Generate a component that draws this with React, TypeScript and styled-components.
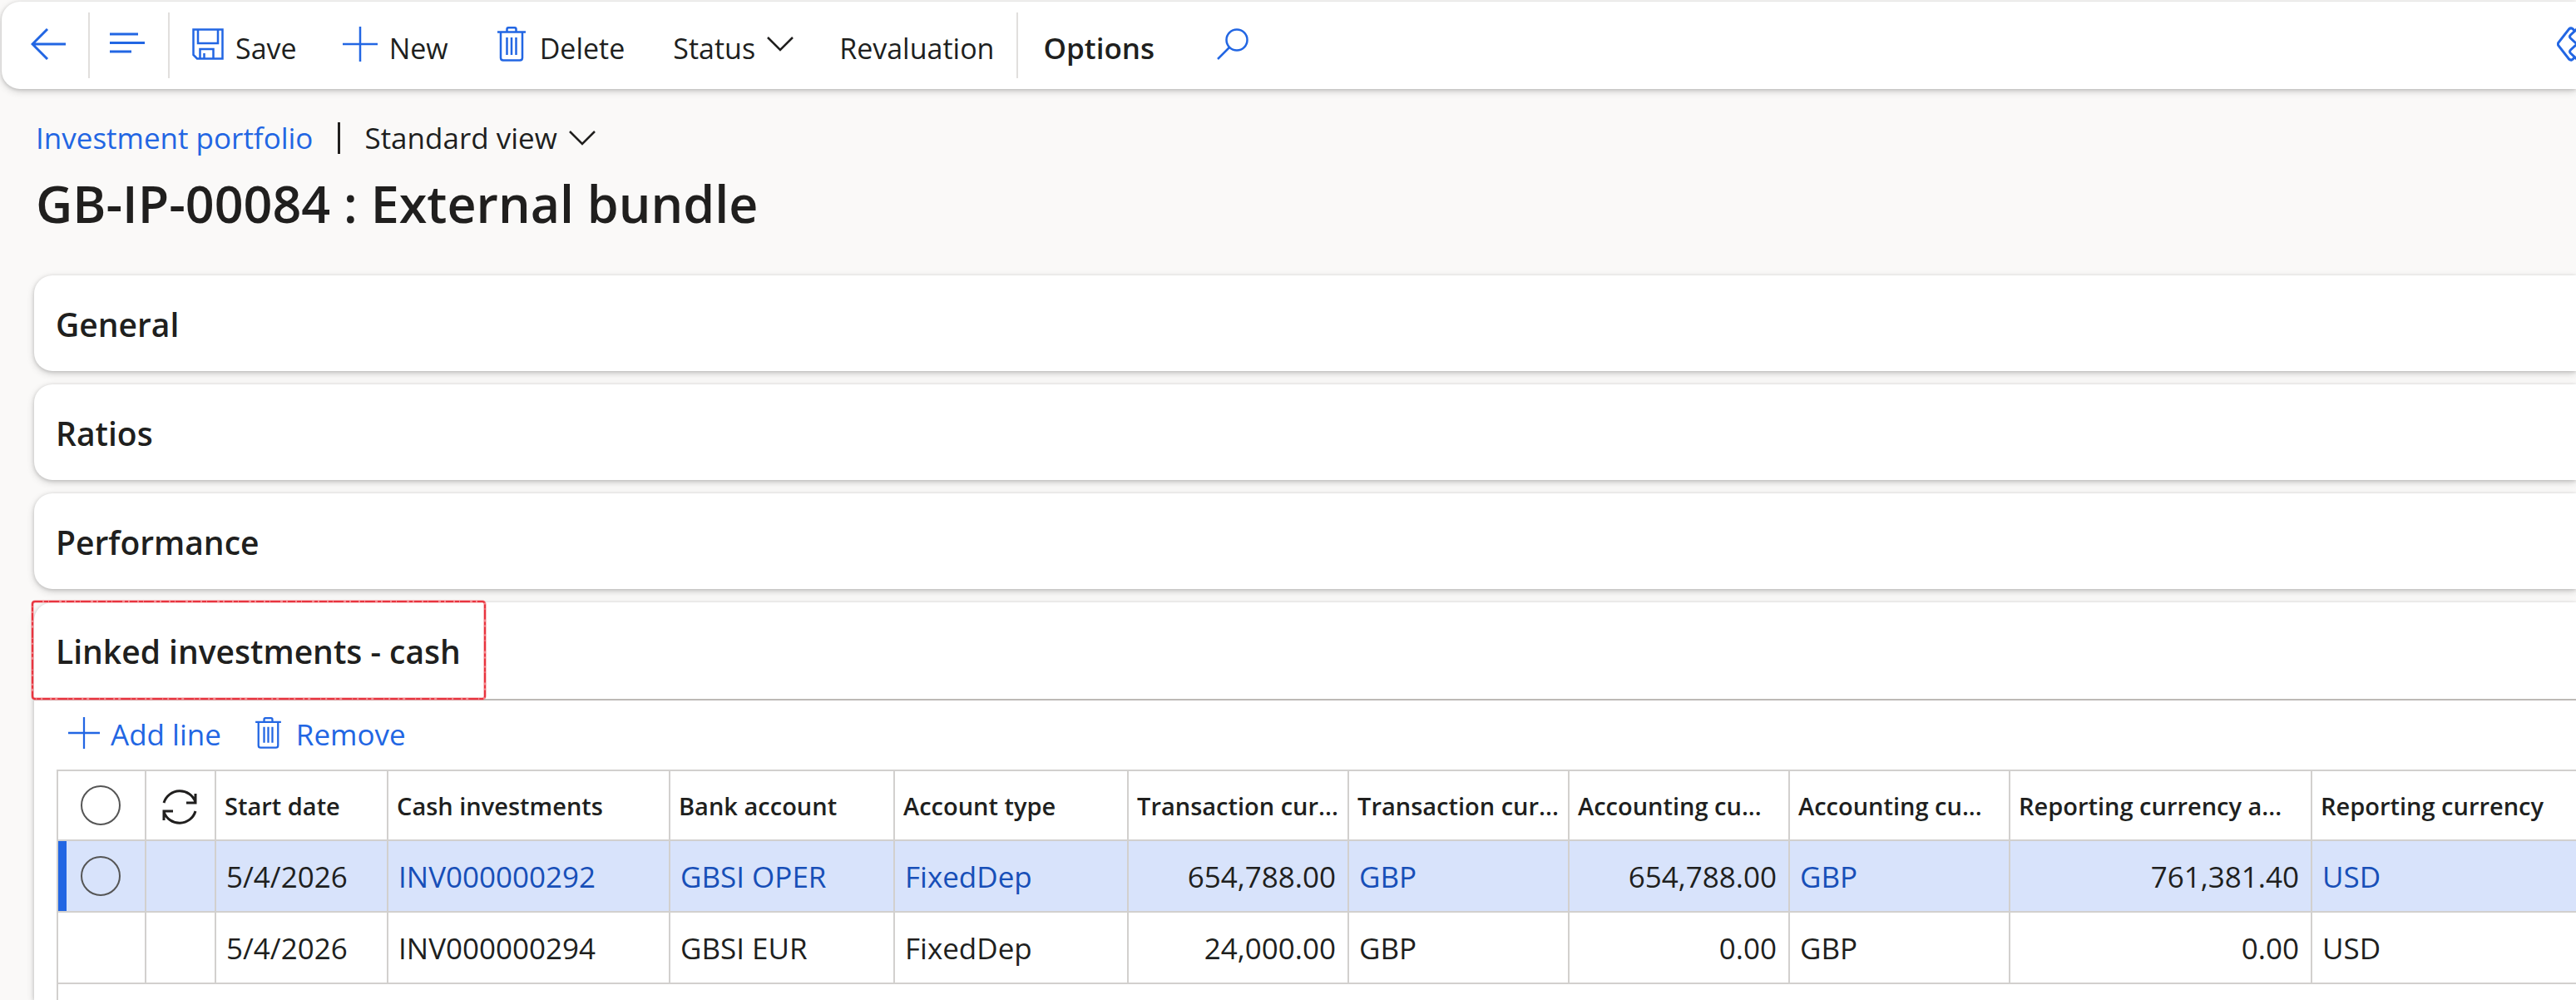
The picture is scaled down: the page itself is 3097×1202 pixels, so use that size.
import React from "react";
import styled, { createGlobalStyle, css } from "styled-components";

const blue = "#2266e3";
const ink = "#201f1e";
const line = "#d2d0ce";

const GlobalStyle = createGlobalStyle`
  * { box-sizing: border-box; }
  html, body { margin: 0; background: #faf9f8; }
  body, button, input { font-family: "Open Sans", "Noto Sans", sans-serif; color: ${ink}; }
  body { font-size: 35px; line-height: 48px; overflow: hidden; }
`;

const Page = styled.div`
  height: 100vh;
  display: flex;
  flex-direction: column;
  overflow: hidden;
`;

const raised = css`
  background: #fff;
  box-shadow: 0 3px 10px rgba(0, 0, 0, 0.16), 0 1px 4px rgba(0, 0, 0, 0.16);
`;

const Toolbar = styled.header`
  ${raised}
  margin: 2px 0 0 2px;
  height: 105px;
  flex: none;
  display: flex;
  align-items: center;
  border-radius: 22px 0 0 22px;
`;

const PlainButton = styled.button`
  border: 0;
  background: none;
  padding: 0;
  font-size: 35px;
  line-height: 48px;
  display: flex;
  align-items: center;
  white-space: nowrap;
  cursor: pointer;
`;

const IconButton = styled(PlainButton)<{ $width: number; $before: number }>`
  width: ${(p) => p.$width}px;
  height: 79px;
  padding: 0 0 3px ${(p) => p.$before}px;
  color: ${blue};
`;

const ToolButton = styled(PlainButton)<{ $gap?: number; $before?: number; $strong?: boolean }>`
  gap: ${(p) => p.$gap ?? 14}px;
  margin-left: ${(p) => p.$before ?? 0}px;
  padding-bottom: 3px;
  font-size: ${(p) => (p.$strong ? 35 : 34)}px;
  font-weight: ${(p) => (p.$strong ? 600 : 400)};
`;

const Label = styled.span`
  padding-top: 10px;
`;

const Rule = styled.span<{ $before?: number }>`
  width: 2px;
  height: 79px;
  background: #e1dfdd;
  margin-left: ${(p) => p.$before ?? 0}px;
`;

const Svg = styled.svg<{ $tone?: string }>`
  flex: none;
  display: block;
  color: ${(p) => p.$tone ?? "currentColor"};
  fill: none;
  stroke: currentColor;
`;

const EndTool = styled.div`
  margin-left: auto;
  width: 23px;
  padding-bottom: 3px;
  overflow: hidden;
`;

const Heading = styled.div`
  padding: 35px 43px 0;
`;

const Crumbs = styled.nav`
  display: flex;
  align-items: center;
`;

const CrumbLink = styled.a`
  color: ${blue};
  text-decoration: none;
`;

const Bar = styled.span`
  width: 3px;
  height: 38px;
  background: ${ink};
  margin: 0 29px 0 30px;
`;

const ViewButton = styled(PlainButton)`
  gap: 14px;
`;

const Title = styled.h1`
  margin: 15px 0 0;
  font-size: 61px;
  line-height: 80px;
  font-weight: 600;
`;

const Sections = styled.main`
  flex: 1;
  min-height: 0;
  display: flex;
  flex-direction: column;
  gap: 16px;
  padding: 46px 0 0 41px;
`;

const Card = styled.section<{ $open?: boolean }>`
  ${raised}
  flex: ${(p) => (p.$open ? "1" : "none")};
  border-radius: ${(p) => (p.$open ? "22px 0 0 0" : "22px 0 0 22px")};
  display: flex;
  flex-direction: column;
`;

const CardHead = styled.h2<{ $open?: boolean }>`
  position: relative;
  margin: 0;
  height: ${(p) => (p.$open ? 118 : 115)}px;
  border-bottom: ${(p) => (p.$open ? "2px solid #bdb9b6" : "0")};
`;

const CardToggle = styled(PlainButton)`
  width: 100%;
  height: 115px;
  padding: 3px 0 0 26px;
  font-size: 39px;
  line-height: 56px;
  font-weight: 600;
`;

const Marker = styled(Svg)`
  position: absolute;
  left: -4px;
  top: -3px;
  pointer-events: none;
`;

const Actions = styled.div`
  display: flex;
  align-items: center;
  height: 83px;
  padding: 0 0 5px 41px;
  gap: 41px;
`;

const Action = styled(PlainButton)<{ $gap: number }>`
  color: ${blue};
  gap: ${(p) => p.$gap}px;
`;

const ActionLabel = styled.span`
  padding-top: 4px;
`;

const GridBox = styled.div`
  flex: 1;
  margin-left: 27px;
  border-left: 2px solid ${line};
  border-top: 2px solid ${line};
  overflow: hidden;
`;

const Table = styled.table`
  table-layout: fixed;
  width: 3200px;
  border-collapse: separate;
  border-spacing: 0;
`;

const cell = css`
  height: 86px;
  padding: 2px 14px 0 12px;
  border-right: 2px solid ${line};
  border-bottom: 2px solid ${line};
  white-space: nowrap;
  vertical-align: middle;
`;

const Th = styled.th`
  ${cell}
  height: 84px;
  padding: 2px 0 0 10px;
  font-size: 29px;
  font-weight: 600;
  text-align: left;
`;

const LeadTh = styled(Th)`
  padding: 0 0 0 12px;
`;

const Td = styled.td<{ $right?: boolean }>`
  ${cell}
  text-align: ${(p) => (p.$right ? "right" : "left")};
`;

const Tr = styled.tr<{ $selected?: boolean }>`
  background: ${(p) => (p.$selected ? "#d8e3fb" : "#fff")};
  td:first-child {
    padding-top: 0;
    box-shadow: ${(p) => (p.$selected ? `inset 10px 0 0 ${blue}` : "none")};
  }
`;

const CellLink = styled.a`
  color: #174fb8;
  text-decoration: none;
`;

const Pick = styled.input`
  appearance: none;
  display: block;
  width: 48px;
  height: 48px;
  margin: 0 0 0 15px;
  border: 2px solid #555;
  border-radius: 50%;
  background: transparent;
  &:checked { background: ${blue}; }
`;

const RefreshIcon = styled(Svg)`
  margin: 4px 0 0 6px;
`;

const Plus = ({ size = 42 }: { size?: number }) => (
  <Svg width={size} height={size} viewBox="0 0 42 42" strokeWidth="2.500" $tone={blue}>
    <path d="M21 0v42M0 21h42" />
  </Svg>
);

const Trash = ({ width = 34, height = 42 }: { width?: number; height?: number }) => (
  <Svg width={width} height={height} viewBox="0 0 34 42" strokeWidth="2.500" $tone={blue}>
    <path d="M0 6.500h34M11.500 6V3q0-1.700 1.700-1.700h7.600q1.700 0 1.700 1.700v3M4 6.500V37.500q0 3 3 3h20q3 0 3-3V6.500M11.500 13v21M17 13v21M22.500 13v21" />
  </Svg>
);

const Chevron = () => (
  <Svg width="32" height="18" viewBox="0 0 32 18" strokeWidth="2.500">
    <path d="M1 1l15 15L31 1" />
  </Svg>
);

const columns = [106, 84, 207, 339, 270, 281, 265, 265, 265, 265, 363, 490];
const headers = [
  "Start date",
  "Cash investments",
  "Bank account",
  "Account type",
  "Transaction cur...",
  "Transaction cur...",
  "Accounting cu...",
  "Accounting cu...",
  "Reporting currency a...",
  "Reporting currency",
];
const rows = [
  ["5/4/2026", "INV000000292", "GBSI OPER", "FixedDep", "654,788.00", "GBP", "654,788.00", "GBP", "761,381.40", "USD"],
  ["5/4/2026", "INV000000294", "GBSI EUR", "FixedDep", "24,000.00", "GBP", "0.00", "GBP", "0.00", "USD"],
];
const numeric = [4, 6, 8];

export default function App() {
  return (
    <Page>
      <GlobalStyle />
      <Toolbar>
        <IconButton $width={104} $before={35} aria-label="Back">
          <Svg width="42" height="38" viewBox="0 0 42 38" strokeWidth="3">
            <path d="M20 1L2 19l18 18M2 19h40" />
          </Svg>
        </IconButton>
        <Rule />
        <IconButton $width={94} $before={24} aria-label="Navigation">
          <Svg width="42" height="28" viewBox="0 0 42 28" strokeWidth="3">
            <path d="M0 2h34M0 12.500h42M0 23h26" />
          </Svg>
        </IconButton>
        <Rule />
        <ToolButton $before={27}>
          <Svg width="38" height="38" viewBox="0 0 38 38" strokeWidth="2.500" $tone={blue}>
            <path d="M1.500 1.500h35v35H6l-4.500-4.500zM7 1.500v16.500h24V1.500M9.500 36.500V25h16v11.500M14.500 36.500V30" />
          </Svg>
          <Label>Save</Label>
        </ToolButton>
        <ToolButton $before={55}>
          <Plus />
          <Label>New</Label>
        </ToolButton>
        <ToolButton $before={59} $gap={17}>
          <Trash />
          <Label>Delete</Label>
        </ToolButton>
        <ToolButton $before={58}>
          <Label>Status</Label>
          <Chevron />
        </ToolButton>
        <ToolButton $before={55}>
          <Label>Revaluation</Label>
        </ToolButton>
        <Rule $before={27} />
        <ToolButton $before={30} $strong>
          <Label>Options</Label>
        </ToolButton>
        <ToolButton $before={75} aria-label="Search">
          <Svg width="38" height="38" viewBox="0 0 38 38" strokeWidth="2.500" $tone={blue}>
            <circle cx="24" cy="14" r="12.500" />
            <path d="M15 23L1 37" />
          </Svg>
        </ToolButton>
        <EndTool>
          <PlainButton aria-label="Apps">
            <Svg width="48" height="42" viewBox="0 0 48 42" strokeWidth="3" $tone={blue}>
              <path d="M21 5Q18 0 14.500 3L2 19q-1.300 2 0 4l12.500 16q3.500 3 6.500-2M26 1l-9.500 9q-2 2 0 4l7.500 7-7.500 7q-2 2 0 4l9.500 9M24 21l22-20M24 21l22 20" />
            </Svg>
          </PlainButton>
        </EndTool>
      </Toolbar>

      <Heading>
        <Crumbs>
          <CrumbLink href="#portfolio">Investment portfolio</CrumbLink>
          <Bar />
          <ViewButton>
            Standard view
            <Chevron />
          </ViewButton>
        </Crumbs>
        <Title>GB-IP-00084 : External bundle</Title>
      </Heading>

      <Sections>
        {["General", "Ratios", "Performance"].map((name) => (
          <Card key={name}>
            <CardHead>
              <CardToggle aria-expanded={false}>{name}</CardToggle>
            </CardHead>
          </Card>
        ))}
        <Card $open>
          <CardHead $open>
            <CardToggle aria-expanded>Linked investments - cash</CardToggle>
            <Marker width="548" height="121" viewBox="0 0 548 121" aria-hidden>
              <rect x="2" y="2" width="544" height="117" rx="3" stroke="#f4868b" strokeWidth="3" />
              <rect x="2" y="2" width="544" height="117" rx="3" stroke="#e8343f" strokeWidth="2" strokeDasharray="9 2 5 1 12 3 4 2" />
            </Marker>
          </CardHead>
          <Actions>
            <Action $gap={13}>
              <Plus size={38} />
              <ActionLabel>Add line</ActionLabel>
            </Action>
            <Action $gap={18}>
              <Trash width={31} height={38} />
              <ActionLabel>Remove</ActionLabel>
            </Action>
          </Actions>
          <GridBox>
            <Table>
              <colgroup>
                {columns.map((w, i) => (
                  <col key={i} style={{ width: w }} />
                ))}
              </colgroup>
              <thead>
                <tr>
                  <LeadTh>
                    <Pick type="radio" name="line" aria-label="Select all" />
                  </LeadTh>
                  <LeadTh>
                    <RefreshIcon width="44" height="44" viewBox="0 0 44 44" strokeWidth="3">
                      <path d="M3 17a20 20 0 0 1 38-1M41 6v11H30M41 27a20 20 0 0 1-38 1M3 38V27h11" />
                    </RefreshIcon>
                  </LeadTh>
                  {headers.map((h, i) => (
                    <Th key={i}>{h}</Th>
                  ))}
                </tr>
              </thead>
              <tbody>
                {rows.map((row, r) => (
                  <Tr key={r} $selected={r === 0}>
                    <Td>{r === 0 && <Pick type="radio" name="line" aria-label="Select line" />}</Td>
                    <Td />
                    {row.map((value, i) => (
                      <Td key={i} $right={numeric.includes(i)}>
                        {r === 0 && i > 0 && !numeric.includes(i) ? (
                          <CellLink href={"#" + value}>{value}</CellLink>
                        ) : (
                          value
                        )}
                      </Td>
                    ))}
                  </Tr>
                ))}
              </tbody>
            </Table>
          </GridBox>
        </Card>
      </Sections>
    </Page>
  );
}
